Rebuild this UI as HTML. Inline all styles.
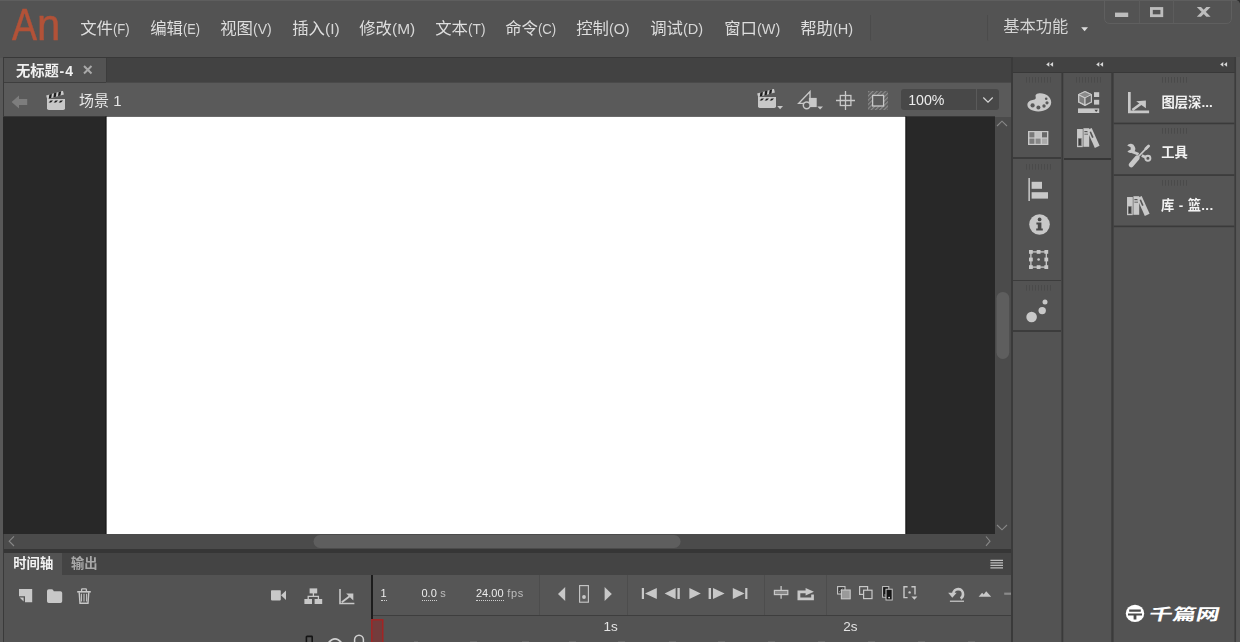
<!DOCTYPE html>
<html lang="zh"><head><meta charset="utf-8"><title>Adobe Animate</title>
<style>
html,body{margin:0;padding:0;background:#535353;}
body{width:1240px;height:642px;overflow:hidden;position:relative;font-family:"Liberation Sans","Noto Sans CJK SC",sans-serif;}
#app{position:absolute;left:0;top:0;width:1240px;height:642px;overflow:hidden;}
#app div,#app svg{position:absolute;}
svg.lb,.tx{filter:grayscale(1)}
svg text{font-family:"Liberation Sans","Noto Sans CJK SC",sans-serif;}
.tx{white-space:nowrap;line-height:1.2;}
.tx span{position:static;}
.an{top:1.9px;font-size:45px;color:#b25238;transform-origin:0 0;line-height:1;letter-spacing:-1px;-webkit-text-stroke:0.5px #b25238}
</style></head><body><div id="app">
<div style="left:0px;top:0px;width:1240px;height:642px;background:#535353;"></div>
<div style="left:0px;top:0px;width:1240px;height:1px;background:#5e5e5e;"></div>
<svg style="left:1234px;top:0" width="6" height="6"><path d="M2.5 0 H6 V3.5 Q5.4 0.6 2.5 0 Z" fill="#2e2e2e"/></svg>
<div style="left:4px;top:57px;width:1232px;height:1px;background:#383838;"></div>
<div style="left:4px;top:58px;width:1007px;height:24.5px;background:#424242;"></div>
<div style="left:4px;top:58px;width:102px;height:24.5px;background:#535353;"></div>
<div style="left:106px;top:58px;width:1px;height:24.5px;background:#3c3c3c;"></div>
<div style="left:4px;top:82.5px;width:1007px;height:34.5px;background:#5a5a5a;"></div>
<div style="left:106px;top:82px;width:905px;height:1px;background:#4a4a4a;"></div>
<svg style="left:4px;top:116px" width="991" height="419" viewBox="0 0 991 419"><rect x="0" y="0.2" width="991" height="417.8" fill="#282828"/><rect x="101.6" y="-0.4" width="800.7" height="419" fill="#101010"/><rect x="102.6" y="0.6" width="798.7" height="417.4" fill="#ffffff"/><rect x="0" y="-1" width="991" height="1.2" fill="#5a5a5a"/></svg>
<div style="left:995px;top:117px;width:16px;height:417px;background:#4b4b4b;"></div>
<svg style="left:995px;top:290px" width="16" height="72"><rect x="1.5" y="2" width="12.7" height="66.9" rx="6.3" fill="#5e5e5e"/></svg>
<div style="left:4px;top:534px;width:1007px;height:15px;background:#4b4b4b;"></div>
<svg style="left:312px;top:534px" width="372" height="15"><rect x="1.5" y="1" width="367.1" height="13" rx="6.5" fill="#5e5e5e"/></svg>
<div style="left:4px;top:549px;width:1007px;height:3.5px;background:#363636;"></div>
<div style="left:4px;top:552.5px;width:1007px;height:22px;background:#444444;"></div>
<div style="left:4px;top:552.5px;width:58px;height:22px;background:#535353;"></div>
<div style="left:4px;top:574.5px;width:1007px;height:68px;background:#535353;"></div>
<div style="left:373px;top:574.5px;width:638px;height:41px;background:#565656;"></div>
<div style="left:371px;top:575px;width:2px;height:43.5px;background:#1c1c1c;"></div>
<div style="left:373px;top:615px;width:638px;height:1px;background:#3e3e3e;"></div>
<div style="left:538.5px;top:575px;width:1px;height:40px;background:#4d4d4d;"></div>
<div style="left:626.5px;top:575px;width:1px;height:40px;background:#4d4d4d;"></div>
<div style="left:763.8px;top:575px;width:1px;height:40px;background:#4d4d4d;"></div>
<div style="left:825.8px;top:575px;width:1px;height:40px;background:#4d4d4d;"></div>
<div style="left:0px;top:58px;width:3px;height:584px;background:#585858;"></div>
<div style="left:3px;top:57px;width:1.2px;height:585px;background:#3a3a3a;"></div>
<div style="left:4px;top:82px;width:102px;height:1px;background:#3e3e3e;"></div>
<div style="left:3px;top:117px;width:1.2px;height:417px;background:#282828;"></div>
<div style="left:1011px;top:57px;width:2.2px;height:585px;background:#3a3a3a;"></div>
<div style="left:1013px;top:57px;width:222.5px;height:15px;background:#424242;"></div>
<div style="left:1013px;top:72px;width:223px;height:1.2px;background:#383838;"></div>
<svg style="left:1060px;top:72px" width="4" height="570"><rect x="1.4" y="0" width="1.9" height="570" fill="#3a3a3a"/></svg>
<svg style="left:1110px;top:72px" width="5" height="570"><rect x="1.3" y="0" width="2.3" height="570" fill="#3b3b3b"/></svg>
<svg style="left:1233px;top:57px" width="7" height="585"><rect x="1.4" y="0" width="1.8" height="585" fill="#3c3c3c"/><rect x="3.2" y="0" width="3.8" height="585" fill="#575757"/></svg>
<div style="left:1013px;top:157.4px;width:48.2px;height:1.8px;background:#3c3c3c;"></div>
<div style="left:1013px;top:279.6px;width:48.2px;height:1.8px;background:#3c3c3c;"></div>
<div style="left:1013px;top:330.4px;width:48.2px;height:1.8px;background:#3c3c3c;"></div>
<div style="left:1063.6px;top:157.8px;width:47.6px;height:2.2px;background:#363636;"></div>
<div style="left:1114px;top:73.2px;width:120px;height:49.39999999999999px;background:#555555;"></div>
<div style="left:1114px;top:124.6px;width:120px;height:49.599999999999994px;background:#555555;"></div>
<div style="left:1114px;top:176.2px;width:120px;height:49.0px;background:#555555;"></div>
<svg style="left:1113px;top:72px" width="122" height="160"><rect x="0.8" y="50.6" width="120.6" height="1.6" fill="#3a3a3a"/><rect x="0.8" y="102.3" width="120.6" height="1.6" fill="#3a3a3a"/><rect x="0.8" y="153.6" width="120.6" height="1.6" fill="#3a3a3a"/></svg>
<svg class="lb" style="left:76.8px;top:14.2px" width="56" height="29" viewBox="0 0 56 29" role="img" aria-label="文件(F)"><title>文件(F)</title><text x="3.2" y="20" font-size="16.4" fill="#dedede">文件</text><text transform="translate(36 20) scale(0.844 1)" font-size="15.5" fill="#d6d6d6" xml:space="preserve">(F)</text></svg>
<svg class="lb" style="left:147.3px;top:14.2px" width="56" height="29" viewBox="0 0 56 29" role="img" aria-label="编辑(E)"><title>编辑(E)</title><text x="3.2" y="20" font-size="16.4" fill="#dedede">编辑</text><text transform="translate(36 20) scale(0.82 1)" font-size="15.5" fill="#d6d6d6" xml:space="preserve">(E)</text></svg>
<svg class="lb" style="left:216.8px;top:14.2px" width="58" height="29" viewBox="0 0 58 29" role="img" aria-label="视图(V)"><title>视图(V)</title><text x="3.2" y="20" font-size="16.4" fill="#dedede">视图</text><text transform="translate(36 20) scale(0.905 1)" font-size="15.5" fill="#d6d6d6" xml:space="preserve">(V)</text></svg>
<svg class="lb" style="left:289.1px;top:14.2px" width="54" height="29" viewBox="0 0 54 29" role="img" aria-label="插入(I)"><title>插入(I)</title><text x="3.2" y="20" font-size="16.4" fill="#dedede">插入</text><text transform="translate(36 20) scale(1.005 1)" font-size="15.5" fill="#d6d6d6" xml:space="preserve">(I)</text></svg>
<svg class="lb" style="left:356.1px;top:14.2px" width="63" height="29" viewBox="0 0 63 29" role="img" aria-label="修改(M)"><title>修改(M)</title><text x="3.2" y="20" font-size="16.4" fill="#dedede">修改</text><text transform="translate(36 20) scale(0.998 1)" font-size="15.5" fill="#d6d6d6" xml:space="preserve">(M)</text></svg>
<svg class="lb" style="left:431.9px;top:14.2px" width="57" height="29" viewBox="0 0 57 29" role="img" aria-label="文本(T)"><title>文本(T)</title><text x="3.2" y="20" font-size="16.4" fill="#dedede">文本</text><text transform="translate(36 20) scale(0.882 1)" font-size="15.5" fill="#d6d6d6" xml:space="preserve">(T)</text></svg>
<svg class="lb" style="left:502.4px;top:14.2px" width="58" height="29" viewBox="0 0 58 29" role="img" aria-label="命令(C)"><title>命令(C)</title><text x="3.2" y="20" font-size="16.4" fill="#dedede">命令</text><text transform="translate(36 20) scale(0.846 1)" font-size="15.5" fill="#d6d6d6" xml:space="preserve">(C)</text></svg>
<svg class="lb" style="left:573.1px;top:14.2px" width="60" height="29" viewBox="0 0 60 29" role="img" aria-label="控制(O)"><title>控制(O)</title><text x="3.2" y="20" font-size="16.4" fill="#dedede">控制</text><text transform="translate(36 20) scale(0.914 1)" font-size="15.5" fill="#d6d6d6" xml:space="preserve">(O)</text></svg>
<svg class="lb" style="left:647.4px;top:14.2px" width="60" height="29" viewBox="0 0 60 29" role="img" aria-label="调试(D)"><title>调试(D)</title><text x="3.2" y="20" font-size="16.4" fill="#dedede">调试</text><text transform="translate(36 20) scale(0.939 1)" font-size="15.5" fill="#d6d6d6" xml:space="preserve">(D)</text></svg>
<svg class="lb" style="left:721.1px;top:14.2px" width="63" height="29" viewBox="0 0 63 29" role="img" aria-label="窗口(W)"><title>窗口(W)</title><text x="3.2" y="20" font-size="16.4" fill="#dedede">窗口</text><text transform="translate(36 20) scale(0.93 1)" font-size="15.5" fill="#d6d6d6" xml:space="preserve">(W)</text></svg>
<svg class="lb" style="left:797.4px;top:14.2px" width="60" height="29" viewBox="0 0 60 29" role="img" aria-label="帮助(H)"><title>帮助(H)</title><text x="3.2" y="20" font-size="16.4" fill="#dedede">帮助</text><text transform="translate(36 20) scale(0.939 1)" font-size="15.5" fill="#d6d6d6" xml:space="preserve">(H)</text></svg>
<svg class="lb" style="left:1000px;top:12.2px" width="72" height="28" viewBox="0 0 72 28" role="img" aria-label="基本功能"><title>基本功能</title><text x="3.2" y="20" font-size="16.3" fill="#d4d4d4">基本功能</text></svg>
<svg class="lb" style="left:13px;top:57.8px" width="64" height="26" viewBox="0 0 64 26" role="img" aria-label="无标题-4"><title>无标题-4</title><text x="3" y="18" font-size="14.3" font-weight="bold" fill="#f0f0f0">无标题</text><text x="46.5" y="18" font-size="14" fill="#f0f0f0" font-weight="bold" letter-spacing="1.0" xml:space="preserve">-4</text></svg>
<svg class="lb" style="left:76px;top:87px" width="49" height="27" viewBox="0 0 49 27" role="img" aria-label="场景 1"><title>场景 1</title><text x="3" y="19" font-size="15" fill="#e6e6e6">场景</text><text x="33" y="19" font-size="15" fill="#e6e6e6" xml:space="preserve"> 1</text></svg>
<svg class="lb" style="left:10px;top:550.6px" width="46" height="24" viewBox="0 0 46 24" role="img" aria-label="时间轴"><title>时间轴</title><text x="3.3" y="17" font-size="13.3" font-weight="bold" fill="#f2f2f2">时间轴</text></svg>
<svg class="lb" style="left:68px;top:550.6px" width="33" height="24" viewBox="0 0 33 24" role="img" aria-label="输出"><title>输出</title><text x="3" y="17" font-size="13.3" font-weight="bold" fill="#a8a8a8">输出</text></svg>
<svg class="lb" style="left:1158.3px;top:89.7px" width="58" height="24" viewBox="0 0 58 24" role="img" aria-label="图层深..."><title>图层深...</title><text x="3.4" y="17" font-size="13.3" font-weight="bold" fill="#f2f2f2">图层深</text><text x="43.5" y="17" font-size="13.5" fill="#f2f2f2" font-weight="bold" xml:space="preserve">...</text></svg>
<svg class="lb" style="left:1158.3px;top:140.3px" width="34" height="24" viewBox="0 0 34 24" role="img" aria-label="工具"><title>工具</title><text x="3.3" y="17" font-size="13.3" font-weight="bold" fill="#f2f2f2">工具</text></svg>
<svg class="lb" style="left:1158.3px;top:193.1px" width="59" height="24" viewBox="0 0 59 24" role="img" aria-label="库 - 篮..."><title>库 - 篮...</title><text x="3" y="17" font-size="13.3" font-weight="bold" fill="#f2f2f2">库</text><text x="16.5" y="17" font-size="13.5" fill="#f2f2f2" font-weight="bold" letter-spacing="0.4" xml:space="preserve"> - </text><text x="29.7" y="17" font-size="13.3" font-weight="bold" fill="#f2f2f2">篮</text><text x="43.2" y="17" font-size="13.5" fill="#f2f2f2" font-weight="bold" letter-spacing="0.4" xml:space="preserve">...</text></svg>
<div class="an" style="left:11.6px;transform:scaleX(0.835)">A</div><div class="an" style="left:37px;transform:scaleX(0.93)">n</div>
<div style="left:901px;top:89px;width:98px;height:21px;background:#484848;border-radius:3px;"></div>
<div style="left:976px;top:89px;width:1px;height:21px;background:#5a5a5a;"></div>
<div class="tx" style="left:908.2px;top:91.8px;font-size:14.2px;color:#ececec">100%</div>
<div class="tx" style="left:380.5px;top:587px;font-size:11px;color:#ececec"><span style="border-bottom:1px dotted #cfcfcf;padding-bottom:1px;">1</span></div>
<div class="tx" style="left:421.5px;top:587px;font-size:11px;color:#ececec"><span style="border-bottom:1px dotted #cfcfcf;padding-bottom:1px;">0.0</span><span style="color:#bdbdbd;letter-spacing:0.5px"> s</span></div>
<div class="tx" style="left:476px;top:587px;font-size:11px;color:#ececec"><span style="border-bottom:1px dotted #cfcfcf;padding-bottom:1px;">24.00</span><span style="color:#bdbdbd;letter-spacing:0.7px"> fps</span></div>
<div class="tx" style="left:603.6px;top:619.4px;font-size:13.5px;color:#e4e4e4">1s</div>
<div class="tx" style="left:843.3px;top:619.4px;font-size:13.5px;color:#e4e4e4">2s</div>
<div style="left:414px;top:641px;width:4px;height:1px;background:rgba(200,200,200,0.15);"></div>
<div style="left:470px;top:641px;width:7px;height:1px;background:rgba(200,200,200,0.15);"></div>
<div style="left:522px;top:641px;width:7px;height:1px;background:rgba(200,200,200,0.15);"></div>
<div style="left:569px;top:641px;width:7px;height:1px;background:rgba(200,200,200,0.15);"></div>
<div style="left:618px;top:641px;width:7px;height:1px;background:rgba(200,200,200,0.15);"></div>
<div style="left:669px;top:641px;width:7px;height:1px;background:rgba(200,200,200,0.15);"></div>
<div style="left:718px;top:641px;width:7px;height:1px;background:rgba(200,200,200,0.15);"></div>
<div style="left:768px;top:641px;width:7px;height:1px;background:rgba(200,200,200,0.15);"></div>
<div style="left:818px;top:641px;width:7px;height:1px;background:rgba(200,200,200,0.15);"></div>
<div style="left:868px;top:641px;width:7px;height:1px;background:rgba(200,200,200,0.15);"></div>
<div style="left:918px;top:641px;width:7px;height:1px;background:rgba(200,200,200,0.15);"></div>
<div style="left:968px;top:641px;width:7px;height:1px;background:rgba(200,200,200,0.15);"></div>
<svg style="left:1124px;top:602px" width="100" height="24" viewBox="0 0 100 24" role="img" aria-label="千篇网"><title>千篇网</title><ellipse cx="11" cy="11.4" rx="9.2" ry="8.6" fill="#fff"/><path fill="#4a4a4a" d="M5.2 7.6 H16.8 V9.8 H5.2 Z M4 11.4 H18 V13.6 H12.4 V17.6 H9.6 V13.6 H4 Z"/><g transform="translate(27.2 4.2) skewX(-13) scale(1.47 1.0)"><text x="0" y="14" font-size="16" font-weight="bold" fill="#fff">千篇网</text></g></svg>
<svg style="left:10px;top:93px" width="20" height="18" viewBox="0 0 20 18" ><path fill="#7d7d7d" d="M1.6 9 L9 2.6 V6 H17.2 V12 H9 V15.4 Z"/></svg>
<svg style="left:46px;top:90.5px" width="28" height="22" viewBox="0 0 28 22" ><path fill="#c8c8c8" d="M1 8 H19 V17.2 Q19 19 17.2 19 H2.8 Q1 19 1 17.2 Z"/><path fill="#1e1e1e" d="M4.6 9.4 H7 L5 11.6 H2.6 Z M9.6 9.4 H12 L10 11.6 H7.6 Z M14.6 9.4 H17 L15 11.6 H12.6 Z"/><g transform="rotate(-16 1.2 8.2)"><rect x="1.2" y="4.4" width="17.4" height="3.8" fill="#c8c8c8"/><path fill="#1e1e1e" d="M4.6 4.4 H7.2 L5.4 8.2 H2.8 Z M9.4 4.4 H12 L10.2 8.2 H7.6 Z M14.2 4.4 H16.8 L15 8.2 H12.4 Z"/></g></svg>
<svg style="left:757px;top:88.5px" width="28" height="22" viewBox="0 0 28 22" ><path fill="#c8c8c8" d="M1 8 H19 V17.2 Q19 19 17.2 19 H2.8 Q1 19 1 17.2 Z"/><path fill="#1e1e1e" d="M4.6 9.4 H7 L5 11.6 H2.6 Z M9.6 9.4 H12 L10 11.6 H7.6 Z M14.6 9.4 H17 L15 11.6 H12.6 Z"/><g transform="rotate(-16 1.2 8.2)"><rect x="1.2" y="4.4" width="17.4" height="3.8" fill="#c8c8c8"/><path fill="#1e1e1e" d="M4.6 4.4 H7.2 L5.4 8.2 H2.8 Z M9.4 4.4 H12 L10.2 8.2 H7.6 Z M14.2 4.4 H16.8 L15 8.2 H12.4 Z"/></g><path fill="#c8c8c8" d="M20.2 17 H26 L23.1 20.2 Z"/></svg>
<svg style="left:81px;top:63px" width="14" height="14" viewBox="0 0 14 14" ><path d="M3 3 L10.5 10.5 M10.5 3 L3 10.5" stroke="#a9a9a9" stroke-width="2" fill="none"/></svg>
<svg style="left:797px;top:89.5px" width="28" height="22" viewBox="0 0 28 22" ><rect x="11.9" y="7.9" width="7.8" height="9.2" fill="#c8c8c8"/><path d="M1.6 13.4 L13 1.6 V13.4 Z" fill="none" stroke="#c8c8c8" stroke-width="1.4" stroke-linejoin="miter"/><circle cx="9.7" cy="15.3" r="3.4" fill="#5a5a5a" stroke="#c8c8c8" stroke-width="1.5"/><path fill="#c8c8c8" d="M20.3 16.4 H26 L23.1 19.6 Z"/></svg>
<svg style="left:836px;top:91px" width="19" height="19" viewBox="0 0 19 19" ><path d="M9.5 0 V19 M0 9.5 H19" stroke="#c8c8c8" stroke-width="1.3" fill="none"/><rect x="4.3" y="4.5" width="10.6" height="10" fill="none" stroke="#c8c8c8" stroke-width="1.3"/></svg>
<svg style="left:867.5px;top:91px" width="20" height="19" viewBox="0 0 20 19" ><defs><pattern id="ht" width="3" height="3" patternUnits="userSpaceOnUse" patternTransform="rotate(45)"><rect width="1.3" height="3" fill="#8c8c8c"/></pattern></defs><rect x="0" y="0" width="20" height="19" fill="url(#ht)"/><rect x="4.6" y="4.4" width="11" height="10.6" fill="#5a5a5a" stroke="#c8c8c8" stroke-width="1.3"/></svg>
<svg style="left:982px;top:96px" width="12" height="8" viewBox="0 0 12 8" ><path d="M1.3 1.5 L6 6.2 L10.7 1.5" stroke="#d6d6d6" stroke-width="1.2" fill="none"/></svg>
<svg style="left:996px;top:119px" width="12" height="9" viewBox="0 0 12 9" ><path d="M1 7 L6 2.2 L11 7" stroke="#888888" stroke-width="1.1" fill="none"/></svg>
<svg style="left:996px;top:522.6px" width="12" height="9" viewBox="0 0 12 9" ><path d="M1 2 L6 6.8 L11 2" stroke="#888888" stroke-width="1.1" fill="none"/></svg>
<svg style="left:7px;top:535px" width="9" height="13" viewBox="0 0 9 13" ><path d="M7 1.4 L2.2 6.2 L7 11" stroke="#888888" stroke-width="1.1" fill="none"/></svg>
<svg style="left:984.2px;top:535px" width="9" height="13" viewBox="0 0 9 13" ><path d="M2 1.5 L6 6.2 L2 10.9" stroke="#888888" stroke-width="1.1" fill="none"/></svg>
<svg style="left:18px;top:588px" width="16" height="16" viewBox="0 0 16 16" ><path fill="#c8c8c8" d="M1 1 H14.2 V14.2 H7 V8.2 H1 Z"/><path fill="#c8c8c8" d="M1.6 9.6 H5.6 V13.6 Z"/></svg>
<svg style="left:46px;top:588px" width="18" height="16" viewBox="0 0 18 16" ><path fill="#c8c8c8" d="M1 3 Q1 1.2 2.8 1.2 H5.6 Q6.8 1.2 7.4 2.4 L7.8 3.2 H14.4 Q16.2 3.2 16.2 5 V13.2 Q16.2 15 14.4 15 H2.8 Q1 15 1 13.2 Z"/></svg>
<svg style="left:77px;top:587.5px" width="14" height="16" viewBox="0 0 14 16" ><path fill="none" stroke="#c8c8c8" stroke-width="1.4" d="M2.2 4.2 L3 15.3 H11 L11.8 4.2"/><rect x="0.2" y="3" width="13.6" height="1.6" fill="#c8c8c8"/><path fill="none" stroke="#c8c8c8" stroke-width="1.3" d="M4.6 3 V1.6 Q4.6 0.8 5.4 0.8 H8.6 Q9.4 0.8 9.4 1.6 V3"/><path stroke="#c8c8c8" stroke-width="1.05" d="M4.4 5.8 V13.4 M7 5.8 V13.4 M9.6 5.8 V13.4"/></svg>
<svg style="left:270px;top:589px" width="17" height="13" viewBox="0 0 17 13" ><rect x="1" y="1.2" width="9.8" height="10.2" rx="0.8" fill="#c8c8c8"/><path fill="#c8c8c8" d="M11 6.3 L16 1.6 V11 Z"/></svg>
<svg style="left:304px;top:588px" width="19" height="17" viewBox="0 0 19 17" ><rect x="5.6" y="0.4" width="7.6" height="5" fill="#c8c8c8"/><rect x="0.4" y="11" width="7.6" height="5" fill="#c8c8c8"/><rect x="10.6" y="11" width="7.6" height="5" fill="#c8c8c8"/><path d="M9.4 5 V8.4 M4.2 11 V8.4 H14.4 V11" stroke="#c8c8c8" stroke-width="1.3" fill="none"/></svg>
<svg style="left:339px;top:589.2px" width="16" height="16" viewBox="0 0 16 16" ><path fill="#c8c8c8" d="M0.2 0 H1.8 V13.8 H15.4 V15.2 H0.2 Z"/><path d="M2.8 13.2 L10.6 7.2" stroke="#c8c8c8" stroke-width="1.8" fill="none"/><path fill="#c8c8c8" d="M7.2 4.5 H14.3 V11.6 Z"/></svg>
<svg style="left:557px;top:586px" width="10" height="16" viewBox="0 0 10 16" ><path fill="#c8c8c8" d="M8.2 1 V15 L1 8 Z"/></svg>
<svg style="left:579px;top:585px" width="10" height="18" viewBox="0 0 10 18" ><rect x="0.6" y="0.6" width="8.8" height="16.6" fill="#5e5e5e" stroke="#c8c8c8" stroke-width="1.1"/><circle cx="5" cy="12" r="1.9" fill="#c8c8c8"/></svg>
<svg style="left:604px;top:586px" width="10" height="16" viewBox="0 0 10 16" ><path fill="#c8c8c8" d="M0.6 1 V15 L7.8 8 Z"/></svg>
<svg style="left:641px;top:587px" width="17" height="13" viewBox="0 0 17 13" ><rect x="0.8" y="1" width="2.2" height="11" fill="#c8c8c8"/><path fill="#c8c8c8" d="M15.8 1 V12 L4 6.5 Z"/></svg>
<svg style="left:664px;top:587px" width="17" height="13" viewBox="0 0 17 13" ><path fill="#c8c8c8" d="M11.6 1 V12 L0.6 6.5 Z"/><rect x="13.4" y="1" width="2.4" height="11" fill="#c8c8c8"/></svg>
<svg style="left:689px;top:587px" width="13" height="13" viewBox="0 0 13 13" ><path fill="#c8c8c8" d="M0.4 1 V12 L11.8 6.5 Z"/></svg>
<svg style="left:708px;top:587px" width="18" height="13" viewBox="0 0 18 13" ><rect x="0.6" y="1" width="2.4" height="11" fill="#c8c8c8"/><path fill="#c8c8c8" d="M5 1 V12 L16.6 6.5 Z"/></svg>
<svg style="left:732px;top:587px" width="17" height="13" viewBox="0 0 17 13" ><path fill="#c8c8c8" d="M0.8 1 V12 L12.6 6.5 Z"/><rect x="13.2" y="1" width="2.2" height="11" fill="#c8c8c8"/></svg>
<svg style="left:773px;top:585px" width="16" height="15" viewBox="0 0 16 15" ><path d="M8.1 1 V13.8" stroke="#c8c8c8" stroke-width="1.3"/><rect x="1.4" y="5.4" width="13.4" height="4.2" fill="#888888" stroke="#c8c8c8" stroke-width="1.2"/></svg>
<svg style="left:796.5px;top:586.5px" width="17" height="14" viewBox="0 0 17 14" ><path fill="#c8c8c8" d="M0.5 3.6 H8.6 V1 L16.9 4.8 L8.6 8.4 V6.2 H3.3 V10.5 H14.2 V7.6 H16.9 V13.2 H0.5 Z"/></svg>
<svg style="left:836.5px;top:586px" width="14" height="14" viewBox="0 0 14 14" ><rect x="0.6" y="0.6" width="7.4" height="7.4" fill="#3a3a3a" stroke="#c8c8c8" stroke-width="1.1"/><path d="M2.4 5.8 L6 2.4" stroke="#c8c8c8" stroke-width="1" stroke-dasharray="1.2 1"/><rect x="4.4" y="4" width="8.8" height="8.8" fill="#9a9a9a" stroke="#c8c8c8" stroke-width="1.1"/></svg>
<svg style="left:858.5px;top:586px" width="14" height="14" viewBox="0 0 14 14" ><rect x="0.6" y="0.6" width="8" height="7.8" fill="none" stroke="#c8c8c8" stroke-width="1.2"/><rect x="4.6" y="4.2" width="8.4" height="8.4" fill="#565656" stroke="#c8c8c8" stroke-width="1.2"/></svg>
<svg style="left:881.5px;top:586px" width="11" height="15" viewBox="0 0 11 15" ><rect x="0.6" y="0.6" width="6.2" height="10.6" fill="#161616" stroke="#c8c8c8" stroke-width="1"/><rect x="4" y="3.2" width="6.2" height="10.8" fill="#161616" stroke="#c8c8c8" stroke-width="1"/><circle cx="7.1" cy="11.6" r="0.9" fill="#ddd"/><circle cx="3" cy="9" r="0.7" fill="#bbb"/></svg>
<svg style="left:902.5px;top:586px" width="15" height="15" viewBox="0 0 15 15" ><path d="M4.6 0.8 H1 V11.6 H4.6 M8.4 0.8 H12 V8.4" stroke="#c8c8c8" stroke-width="1.4" fill="none"/><circle cx="6.6" cy="6.4" r="1.2" fill="#c8c8c8"/><path fill="#c8c8c8" d="M8.4 10.4 H14.4 L11.4 13.8 Z"/></svg>
<svg style="left:948px;top:587.2px" width="17" height="16" viewBox="0 0 17 16" ><path d="M5.3 6.6 A4.85 4.85 0 0 1 15 7.3 A4.85 4.85 0 0 1 12.6 11.5" stroke="#c8c8c8" stroke-width="2.7" fill="none"/><path fill="#c8c8c8" d="M0.2 5.8 H8.7 L4.3 10.8 Z"/><rect x="1.9" y="13.6" width="14.1" height="1.25" fill="#c8c8c8"/></svg>
<svg style="left:977.5px;top:590px" width="14" height="8" viewBox="0 0 14 8" ><path fill="#c8c8c8" d="M0.6 6.8 L4.1 2.7 L5.7 4.4 L8.2 1.3 L13.2 6.8 Z"/></svg>
<svg style="left:1003.5px;top:592px" width="7" height="4" viewBox="0 0 7 4" ><rect x="0.2" y="0.6" width="7" height="2.2" fill="#8a8a8a"/></svg>
<svg style="left:990px;top:558.5px" width="14" height="11" viewBox="0 0 14 11" ><path d="M0.4 1.4 H13 M0.4 3.9 H13 M0.4 6.4 H13 M0.4 8.9 H13" stroke="#bdbdbd" stroke-width="1.2"/></svg>
<svg style="left:305px;top:635.2px" width="10" height="9" viewBox="0 0 10 9" ><rect x="1.4" y="1.4" width="5.8" height="10" fill="none" stroke="#141414" stroke-width="1.6" rx="0.6"/></svg>
<svg style="left:326px;top:636px" width="18" height="8" viewBox="0 0 18 8" ><path d="M1.6 8 Q9 -2.4 16.4 8" stroke="#d0d0d0" stroke-width="1.8" fill="none"/></svg>
<svg style="left:352px;top:633px" width="14" height="10" viewBox="0 0 14 10" ><path d="M2.6 9.6 V6.6 A4.4 4.4 0 0 1 11.4 6.6 V9.6" stroke="#d0d0d0" stroke-width="1.5" fill="none"/></svg>
<svg style="left:371px;top:618.5px" width="13" height="25" viewBox="0 0 13 25" ><rect x="0.8" y="0.8" width="11" height="26" fill="#733c3c" stroke="#ab2020" stroke-width="1.3"/></svg>
<svg style="left:1103.5px;top:0px" width="128" height="25" viewBox="0 0 128 25" ><path d="M0.5 0 V18 Q0.5 23.5 6 23.5 H122 Q127.5 23.5 127.5 18 V0" fill="none" stroke="#5f5f5f" stroke-width="1"/><path d="M35.5 0 V23 M69.5 0 V23" stroke="#5c5c5c" stroke-width="1"/><rect x="11" y="12.6" width="13.2" height="4.4" fill="#bdbdbd"/><rect x="47.4" y="8.5" width="10.4" height="7.2" fill="none" stroke="#bdbdbd" stroke-width="2.8"/><path fill="#bdbdbd" d="M92.8 7 H97 L106.6 16.8 H102.4 Z M102.4 7 H106.6 L97 16.8 H92.8 Z"/></svg>
<svg style="left:1080px;top:26px" width="10" height="7" viewBox="0 0 10 7" ><path fill="#dcdcdc" d="M1.2 1.2 H8 L4.6 5.2 Z"/></svg>
<svg style="left:870px;top:15px" width="3" height="26" viewBox="0 0 3 26" ><rect x="0.4" width="1" height="25.5" fill="#464646"/><rect x="1.4" width="1" height="25.5" fill="#585858"/></svg>
<svg style="left:987px;top:15px" width="3" height="26" viewBox="0 0 3 26" ><rect x="0.4" width="1" height="25.5" fill="#464646"/><rect x="1.4" width="1" height="25.5" fill="#585858"/></svg>
<svg style="left:1046px;top:61.2px" width="9" height="7" viewBox="0 0 9 7" ><path fill="#d8d8d8" d="M0.2 3.4 L3.3 1 V5.8 Z M4 3.4 L7.1 1 V5.8 Z"/></svg>
<svg style="left:1096px;top:61.2px" width="9" height="7" viewBox="0 0 9 7" ><path fill="#d8d8d8" d="M0.2 3.4 L3.3 1 V5.8 Z M4 3.4 L7.1 1 V5.8 Z"/></svg>
<svg style="left:1220px;top:61.2px" width="9" height="7" viewBox="0 0 9 7" ><path fill="#d8d8d8" d="M0.2 3.4 L3.3 1 V5.8 Z M4 3.4 L7.1 1 V5.8 Z"/></svg>
<svg style="left:1026px;top:76.5px" width="27" height="6" viewBox="0 0 27 6" ><rect x="0" y="0" width="1" height="5.6" fill="#4a4a4a"/><rect x="3" y="0" width="1" height="5.6" fill="#4a4a4a"/><rect x="6" y="0" width="1" height="5.6" fill="#4a4a4a"/><rect x="9" y="0" width="1" height="5.6" fill="#4a4a4a"/><rect x="12" y="0" width="1" height="5.6" fill="#4a4a4a"/><rect x="15" y="0" width="1" height="5.6" fill="#4a4a4a"/><rect x="18" y="0" width="1" height="5.6" fill="#4a4a4a"/><rect x="21" y="0" width="1" height="5.6" fill="#4a4a4a"/><rect x="24" y="0" width="1" height="5.6" fill="#4a4a4a"/></svg>
<svg style="left:1076px;top:76.5px" width="27" height="6" viewBox="0 0 27 6" ><rect x="0" y="0" width="1" height="5.6" fill="#4a4a4a"/><rect x="3" y="0" width="1" height="5.6" fill="#4a4a4a"/><rect x="6" y="0" width="1" height="5.6" fill="#4a4a4a"/><rect x="9" y="0" width="1" height="5.6" fill="#4a4a4a"/><rect x="12" y="0" width="1" height="5.6" fill="#4a4a4a"/><rect x="15" y="0" width="1" height="5.6" fill="#4a4a4a"/><rect x="18" y="0" width="1" height="5.6" fill="#4a4a4a"/><rect x="21" y="0" width="1" height="5.6" fill="#4a4a4a"/><rect x="24" y="0" width="1" height="5.6" fill="#4a4a4a"/></svg>
<svg style="left:1162px;top:76.5px" width="27" height="6" viewBox="0 0 27 6" ><rect x="0" y="0" width="1" height="5.6" fill="#4a4a4a"/><rect x="3" y="0" width="1" height="5.6" fill="#4a4a4a"/><rect x="6" y="0" width="1" height="5.6" fill="#4a4a4a"/><rect x="9" y="0" width="1" height="5.6" fill="#4a4a4a"/><rect x="12" y="0" width="1" height="5.6" fill="#4a4a4a"/><rect x="15" y="0" width="1" height="5.6" fill="#4a4a4a"/><rect x="18" y="0" width="1" height="5.6" fill="#4a4a4a"/><rect x="21" y="0" width="1" height="5.6" fill="#4a4a4a"/><rect x="24" y="0" width="1" height="5.6" fill="#4a4a4a"/></svg>
<svg style="left:1026px;top:163.5px" width="27" height="6" viewBox="0 0 27 6" ><rect x="0" y="0" width="1" height="5.6" fill="#4a4a4a"/><rect x="3" y="0" width="1" height="5.6" fill="#4a4a4a"/><rect x="6" y="0" width="1" height="5.6" fill="#4a4a4a"/><rect x="9" y="0" width="1" height="5.6" fill="#4a4a4a"/><rect x="12" y="0" width="1" height="5.6" fill="#4a4a4a"/><rect x="15" y="0" width="1" height="5.6" fill="#4a4a4a"/><rect x="18" y="0" width="1" height="5.6" fill="#4a4a4a"/><rect x="21" y="0" width="1" height="5.6" fill="#4a4a4a"/><rect x="24" y="0" width="1" height="5.6" fill="#4a4a4a"/></svg>
<svg style="left:1026px;top:284.5px" width="27" height="6" viewBox="0 0 27 6" ><rect x="0" y="0" width="1" height="5.6" fill="#4a4a4a"/><rect x="3" y="0" width="1" height="5.6" fill="#4a4a4a"/><rect x="6" y="0" width="1" height="5.6" fill="#4a4a4a"/><rect x="9" y="0" width="1" height="5.6" fill="#4a4a4a"/><rect x="12" y="0" width="1" height="5.6" fill="#4a4a4a"/><rect x="15" y="0" width="1" height="5.6" fill="#4a4a4a"/><rect x="18" y="0" width="1" height="5.6" fill="#4a4a4a"/><rect x="21" y="0" width="1" height="5.6" fill="#4a4a4a"/><rect x="24" y="0" width="1" height="5.6" fill="#4a4a4a"/></svg>
<svg style="left:1162px;top:128px" width="27" height="6" viewBox="0 0 27 6" ><rect x="0" y="0" width="1" height="5.6" fill="#4a4a4a"/><rect x="3" y="0" width="1" height="5.6" fill="#4a4a4a"/><rect x="6" y="0" width="1" height="5.6" fill="#4a4a4a"/><rect x="9" y="0" width="1" height="5.6" fill="#4a4a4a"/><rect x="12" y="0" width="1" height="5.6" fill="#4a4a4a"/><rect x="15" y="0" width="1" height="5.6" fill="#4a4a4a"/><rect x="18" y="0" width="1" height="5.6" fill="#4a4a4a"/><rect x="21" y="0" width="1" height="5.6" fill="#4a4a4a"/><rect x="24" y="0" width="1" height="5.6" fill="#4a4a4a"/></svg>
<svg style="left:1162px;top:179.5px" width="27" height="6" viewBox="0 0 27 6" ><rect x="0" y="0" width="1" height="5.6" fill="#4a4a4a"/><rect x="3" y="0" width="1" height="5.6" fill="#4a4a4a"/><rect x="6" y="0" width="1" height="5.6" fill="#4a4a4a"/><rect x="9" y="0" width="1" height="5.6" fill="#4a4a4a"/><rect x="12" y="0" width="1" height="5.6" fill="#4a4a4a"/><rect x="15" y="0" width="1" height="5.6" fill="#4a4a4a"/><rect x="18" y="0" width="1" height="5.6" fill="#4a4a4a"/><rect x="21" y="0" width="1" height="5.6" fill="#4a4a4a"/><rect x="24" y="0" width="1" height="5.6" fill="#4a4a4a"/></svg>
<svg style="left:1026.6px;top:92.6px" width="25" height="19" viewBox="0 0 25 19" ><path fill="#c8c8c8" d="M11.2 0.4 C18 -0.6 24.4 3.6 24.2 9.6 C24 15.4 17.6 18.6 11 18.4 C5 18.2 0.2 15.6 0.4 11.6 C0.6 8.4 4 7.2 6.6 6.8 C8.8 6.4 9 5 8.6 3.6 C8.2 2 9 0.8 11.2 0.4 Z"/><circle cx="5.6" cy="12.4" r="2.1" fill="#585858"/><circle cx="11.4" cy="14.4" r="2" fill="#585858"/><circle cx="17" cy="13" r="1.7" fill="#585858"/><circle cx="20" cy="9.8" r="1.6" fill="#585858"/><circle cx="19.2" cy="5.8" r="1.3" fill="#585858"/></svg>
<svg style="left:1027.8px;top:131px" width="21" height="14" viewBox="0 0 21 14" ><rect x="0" y="0" width="20.4" height="14" fill="#c8c8c8"/><rect x="1.4" y="1.2" width="5" height="5.2" fill="#7a7a7a"/><rect x="7.6" y="1.2" width="5" height="5.2" fill="#c2c2c2"/><rect x="14" y="1.2" width="5" height="5.2" fill="#686868"/><rect x="1.4" y="7.6" width="5" height="5.2" fill="#7c7c7c"/><rect x="7.6" y="7.6" width="5" height="5.2" fill="#888888"/><rect x="14" y="7.6" width="5" height="5.2" fill="#aaaaaa"/></svg>
<svg style="left:1078px;top:90.8px" width="22" height="23" viewBox="0 0 22 23" ><path d="M7 0.6 L13.4 3.6 V11 L7 14.4 L0.6 11 V3.6 Z" fill="#7e7e7e" stroke="#c8c8c8" stroke-width="1.2"/><path d="M0.6 3.6 L7 6.8 L13.4 3.6 M7 6.8 V14.4" stroke="#c8c8c8" stroke-width="1.2" fill="none"/><path d="M7 6.8 L13.4 3.6 V11 L7 14.4 Z" fill="#666"/><path d="M7 0.6 L13.4 3.6 L7 6.8 L0.6 3.6 Z" fill="#8a8a8a" stroke="#c8c8c8" stroke-width="1"/><path d="M7 6.8 V14.4 M0.6 3.6 V11 L7 14.4 L13.4 11 V3.6" stroke="#c8c8c8" stroke-width="1.2" fill="none"/><rect x="16" y="1.2" width="5.2" height="4.8" fill="#c8c8c8"/><rect x="16" y="8.8" width="5.2" height="4.8" fill="#c8c8c8"/><rect x="0" y="17.4" width="21.2" height="4.6" fill="#c8c8c8"/><path fill="#444" d="M16.4 18.8 H20 L18.2 21 Z"/></svg>
<svg style="left:1077px;top:128px" width="26" height="21" viewBox="0 0 26 21" ><g transform="scale(1.0)"><rect x="0.6" y="1.6" width="4.6" height="17" fill="#6a6a6a" stroke="#c8c8c8" stroke-width="1.1"/><rect x="1.8" y="11" width="2" height="6" fill="#3c3c3c"/><rect x="0.6" y="1.6" width="4.6" height="8.6" fill="#c8c8c8"/><rect x="6.4" y="0.2" width="5.8" height="18.6" fill="#c8c8c8"/><rect x="7.4" y="3" width="3.6" height="1.2" fill="#555"/><rect x="7.4" y="5.6" width="3.6" height="1.2" fill="#777"/><g transform="rotate(-24 15.5 10)"><rect x="13.6" y="0.6" width="5.2" height="19.4" fill="#c8c8c8"/><rect x="15.2" y="3.4" width="1.6" height="6.4" fill="#555"/></g></g></svg>
<svg style="left:1126.5px;top:195.5px" width="26" height="21" viewBox="0 0 26 21" ><g transform="scale(1.0)"><rect x="0.6" y="1.6" width="4.6" height="17" fill="#6a6a6a" stroke="#c8c8c8" stroke-width="1.1"/><rect x="1.8" y="11" width="2" height="6" fill="#3c3c3c"/><rect x="0.6" y="1.6" width="4.6" height="8.6" fill="#c8c8c8"/><rect x="6.4" y="0.2" width="5.8" height="18.6" fill="#c8c8c8"/><rect x="7.4" y="3" width="3.6" height="1.2" fill="#555"/><rect x="7.4" y="5.6" width="3.6" height="1.2" fill="#777"/><g transform="rotate(-24 15.5 10)"><rect x="13.6" y="0.6" width="5.2" height="19.4" fill="#c8c8c8"/><rect x="15.2" y="3.4" width="1.6" height="6.4" fill="#555"/></g></g></svg>
<svg style="left:1028px;top:178px" width="21" height="23" viewBox="0 0 21 23" ><rect x="0.4" y="0" width="1.5" height="23" fill="#c8c8c8"/><rect x="3.6" y="3.8" width="10.4" height="7" fill="#c8c8c8"/><rect x="3.6" y="14.2" width="16.4" height="6.4" fill="#c8c8c8"/></svg>
<svg style="left:1028.6px;top:214.2px" width="21" height="21" viewBox="0 0 21 21" ><circle cx="10.5" cy="10.5" r="10.3" fill="#c8c8c8"/><circle cx="10.6" cy="5.4" r="1.9" fill="#4a4a4a"/><path fill="#4a4a4a" d="M7.4 8.6 H12.4 V14.6 H13.8 V16.6 H7.2 V14.6 H8.8 V10.6 H7.4 Z"/></svg>
<svg style="left:1028.9px;top:249.8px" width="20" height="20" viewBox="0 0 20 20" ><rect x="1.9" y="1.9" width="15.4" height="15.2" fill="none" stroke="#c8c8c8" stroke-width="1.3"/><rect x="0" y="0" width="3.8" height="3.8" fill="#c8c8c8"/><rect x="7.7" y="0" width="3.8" height="3.8" fill="#c8c8c8"/><rect x="15.4" y="0" width="3.8" height="3.8" fill="#c8c8c8"/><rect x="0" y="7.6" width="3.8" height="3.8" fill="#c8c8c8"/><rect x="15.4" y="7.6" width="3.8" height="3.8" fill="#c8c8c8"/><rect x="0" y="15.2" width="3.8" height="3.8" fill="#c8c8c8"/><rect x="7.7" y="15.2" width="3.8" height="3.8" fill="#c8c8c8"/><rect x="15.4" y="15.2" width="3.8" height="3.8" fill="#c8c8c8"/><circle cx="9.6" cy="9.5" r="1.3" fill="#c8c8c8"/></svg>
<svg style="left:1026.2px;top:298.6px" width="23" height="24" viewBox="0 0 23 24" ><circle cx="5.6" cy="18" r="5.3" fill="#c8c8c8"/><circle cx="16.2" cy="11.6" r="3.7" fill="#c8c8c8"/><circle cx="19" cy="3" r="2.5" fill="#c8c8c8"/></svg>
<svg style="left:1127px;top:92px" width="24" height="23" viewBox="0 0 24 23" ><g transform="scale(1.0)"><path fill="#c8c8c8" d="M1 0 H3.7 V18.4 H22.1 V21.2 H1 Z"/><path d="M5.4 18 L14.6 11.2" stroke="#c8c8c8" stroke-width="2.6" fill="none"/><path fill="#c8c8c8" d="M9.2 9.2 L18.9 8.6 V16.2 Z"/></g></svg>
<svg style="left:1126px;top:143px" width="27" height="26" viewBox="0 0 27 26" ><path d="M6 8.6 L12.6 11.2 M15.8 12.4 L20 14.4" stroke="#c8c8c8" stroke-width="2.8" fill="none"/><path fill="#c8c8c8" d="M1.2 2.6 A4.2 4.2 0 0 1 8.6 3.4 A4.2 4.2 0 0 1 7.8 8.8 A4.2 4.2 0 0 1 1.4 8.2 L4.8 6.6 L4.6 4.2 Z"/><circle cx="21.9" cy="15.2" r="2.5" fill="none" stroke="#c8c8c8" stroke-width="1.9"/><path d="M5.2 21.8 L11.2 14.8" stroke="#c8c8c8" stroke-width="5" stroke-linecap="round"/><path d="M11 15 L21.8 3.8" stroke="#c8c8c8" stroke-width="1.8"/><path d="M19.8 5.8 L22.6 3" stroke="#c8c8c8" stroke-width="2.8" stroke-linecap="round"/></svg>
</div></body></html>
